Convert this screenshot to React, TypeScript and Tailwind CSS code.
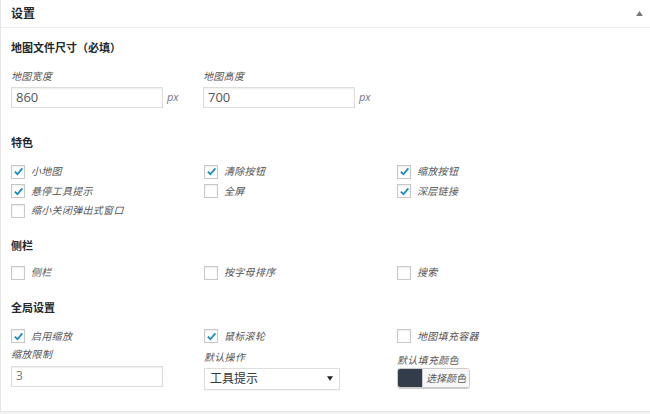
import React from 'react'

const font = { fontFamily: '"Open Sans", "Noto Sans CJK SC", sans-serif' }

function Check({ checked, label }: { checked?: boolean; label: string }) {
  return (
    <label className="flex items-center h-[19.5px] gap-[6px]">
      <span className="w-[14px] h-[14px] border border-[#c8c8c8] bg-white shadow-[inset_0_1px_2px_rgba(0,0,0,0.08)] flex items-center justify-center">
        {checked && (
          <svg viewBox="0 0 12 12" className="w-[11px] h-[11px]">
            <path d="M2 6.2 L4.8 9 L10.2 2.6" fill="none" stroke="#1e8cbe" strokeWidth="2" />
          </svg>
        )}
      </span>
      <span className="italic text-[10px] tracking-[0.3px] text-[#555]">{label}</span>
    </label>
  )
}

function SectionTitle({ children }: { children: React.ReactNode }) {
  return <h3 className="text-[11px] font-bold text-[#23282d] leading-[11px]">{children}</h3>
}

const label = 'italic text-[10px] tracking-[0.3px] text-[#555]'

export default function App() {
  return (
    <div className="w-[650px] h-[414px] bg-[#f1f1f1]" style={font}>
      <div className="h-[412px] bg-white border-l border-b border-[#e5e5e5]">
        <div className="h-[28px] flex items-center justify-between pl-[10px] pr-[7px] border-b border-[#eeeeee]">
          <span className="text-[12px] font-bold text-[#23282d]">设置</span>
          <svg viewBox="0 0 8 6" className="w-[7px] h-[5px]">
            <path d="M0 6 L4 0 L8 6 Z" fill="#72777c" />
          </svg>
        </div>

        <div className="pl-[10px] pt-[14px]">
          <SectionTitle>地图文件尺寸（必填）</SectionTitle>
          <div className="grid grid-cols-[192px_192px] mt-[15px]">
            {[
              ['地图宽度', '860'],
              ['地图高度', '700'],
            ].map(([l, v]) => (
              <div key={l}>
                <div className={`${label} leading-[17px]`}>{l}</div>
                <div className="flex items-center mt-[2px]">
                  <div className="w-[152px] h-[21px] border border-[#dddddd] shadow-[inset_0_1px_2px_rgba(0,0,0,0.07)] px-[4px] flex items-center text-[13px] text-[#555]">
                    {v}
                  </div>
                  <span className="italic text-[11px] text-[#777] ml-[4px]">px</span>
                </div>
              </div>
            ))}
          </div>

          <div className="mt-[29px]">
            <SectionTitle>特色</SectionTitle>
          </div>
          <div className="grid grid-cols-[193px_193px_193px] mt-[14px]">
            <Check checked label="小地图" />
            <Check checked label="清除按钮" />
            <Check checked label="缩放按钮" />
            <Check checked label="悬停工具提示" />
            <Check label="全屏" />
            <Check checked label="深层链接" />
            <Check label="缩小关闭弹出式窗口" />
          </div>

          <div className="mt-[19.5px]">
            <SectionTitle>侧栏</SectionTitle>
          </div>
          <div className="grid grid-cols-[193px_193px_193px] mt-[12px]">
            <Check label="侧栏" />
            <Check label="按字母排序" />
            <Check label="搜索" />
          </div>

          <div className="mt-[19.5px]">
            <SectionTitle>全局设置</SectionTitle>
          </div>
          <div className="grid grid-cols-[193px_193px_193px] mt-[13.5px]">
            <Check checked label="启用缩放" />
            <Check checked label="鼠标滚轮" />
            <Check label="地图填充容器" />
          </div>
          <div className="grid grid-cols-[193px_193px_193px] items-start">
            <div>
              <div className={`${label} leading-[17px]`}>缩放限制</div>
              <div className="w-[152px] h-[21px] border border-[#dddddd] shadow-[inset_0_1px_2px_rgba(0,0,0,0.07)] px-[4px] flex items-center text-[12px] text-[#777] mt-[2.5px]">
                3
              </div>
            </div>
            <div className="pt-[2.5px]">
              <div className={`${label} leading-[17px]`}>默认操作</div>
              <div className="w-[136px] h-[22px] border border-[#dddddd] shadow-[0_1px_1px_rgba(0,0,0,0.04)] pl-[5px] pr-[6px] flex items-center justify-between text-[12px] text-[#32373c] mt-[2px]">
                <span>工具提示</span>
                <svg viewBox="0 0 8 6" className="w-[6px] h-[5px]">
                  <path d="M0 0 L8 0 L4 6 Z" fill="#222" />
                </svg>
              </div>
            </div>
            <div className="pt-[7px]">
              <div className={`${label} leading-[15px]`}>默认填充颜色</div>
              <div className="flex w-[73px] h-[20px] border border-[#cccccc] rounded-[3px] overflow-hidden shadow-[0_1px_0_#ccc]">
                <span className="w-[24px] h-full bg-[#323c4b]" />
                <span className="flex-1 bg-[#f7f7f7] border-l border-[#cccccc] italic text-[10px] text-[#555] flex items-center justify-center">
                  选择颜色
                </span>
              </div>
            </div>
          </div>
        </div>
      </div>
    </div>
  )
}
